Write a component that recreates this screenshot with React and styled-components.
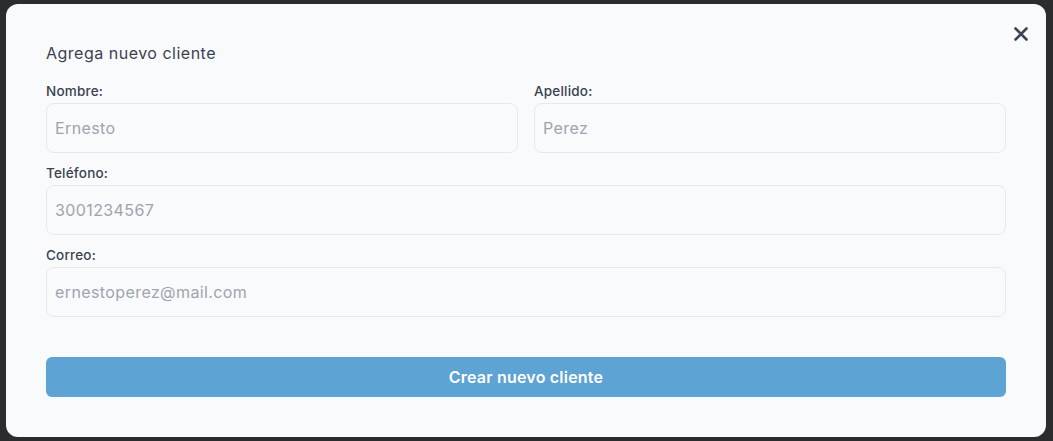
import React from "react";
import styled, { createGlobalStyle } from "styled-components";

const Global = createGlobalStyle`
  html, body { margin: 0; padding: 0; background: #2b2c2e; }
  * { box-sizing: border-box; }
  body { font-family: "Inter", "Noto Sans", sans-serif; }
`;

const Backdrop = styled.div`
  width: 1053px;
  height: 441px;
  padding: 4px 7px 4px 6px;
  background: #2b2c2e;
`;

const Modal = styled.div`
  position: relative;
  width: 1040px;
  height: 433px;
  background: #f9fafc;
  border-radius: 12px;
  padding: 37px 40px 40px 40px;
  display: flex;
  flex-direction: column;
`;

const CloseButton = styled.button`
  position: absolute;
  top: 22px;
  right: 17px;
  width: 16px;
  height: 16px;
  padding: 0;
  border: none;
  background: transparent;
  display: flex;
  align-items: center;
  justify-content: center;
  cursor: pointer;
`;

const Title = styled.h2`
  margin: 0 0 16px 0;
  font-size: 16px;
  line-height: 24px;
  font-weight: 400;
  letter-spacing: 0.5px;
  color: #3a4250;
`;

const Form = styled.form`
  display: flex;
  flex-direction: column;
  gap: 10px;
`;

const Row = styled.div`
  display: grid;
  grid-template-columns: ${(p) => (p.$cols === 2 ? "1fr 1fr" : "1fr")};
  column-gap: 16px;
`;

const Field = styled.div`
  display: flex;
  flex-direction: column;
  gap: 2px;
`;

const Label = styled.label`
  font-size: 13.5px;
  line-height: 20px;
  font-weight: 450;
  letter-spacing: 0.2px;
  color: #3a4250;
`;

const Input = styled.input`
  height: 50px;
  width: 100%;
  padding: 0 8px;
  border: 1px solid #e6e8ec;
  border-radius: 8px;
  background: #f9fafc;
  font-family: inherit;
  font-size: 16px;
  letter-spacing: 0.4px;
  color: #3a4250;
  outline: none;
  &::placeholder {
    color: #9ea4ae;
    font-weight: 400;
  }
`;

const Submit = styled.button`
  margin-top: 40px;
  height: 40px;
  width: 100%;
  border: none;
  border-radius: 6px;
  background: #5da3d3;
  color: #ffffff;
  font-family: inherit;
  font-size: 16px;
  font-weight: 600;
  letter-spacing: 0.2px;
  cursor: pointer;
`;

export default function App() {
  return (
    <>
      <Global />
      <Backdrop>
        <Modal>
          <CloseButton type="button" aria-label="Cerrar">
            <svg width="14" height="14" viewBox="0 0 14 14">
              <path
                d="M1.5 1.5 L12.5 12.5 M12.5 1.5 L1.5 12.5"
                stroke="#3c4653"
                strokeWidth="2.6"
                strokeLinecap="round"
              />
            </svg>
          </CloseButton>
          <Title>Agrega nuevo cliente</Title>
          <Form onSubmit={(e) => e.preventDefault()}>
            <Row $cols={2}>
              <Field>
                <Label>Nombre:</Label>
                <Input placeholder="Ernesto" />
              </Field>
              <Field>
                <Label>Apellido:</Label>
                <Input placeholder="Perez" />
              </Field>
            </Row>
            <Row>
              <Field>
                <Label>Teléfono:</Label>
                <Input placeholder="3001234567" />
              </Field>
            </Row>
            <Row>
              <Field>
                <Label>Correo:</Label>
                <Input placeholder="ernestoperez@mail.com" />
              </Field>
            </Row>
          </Form>
          <Submit type="button">Crear nuevo cliente</Submit>
        </Modal>
      </Backdrop>
    </>
  );
}
